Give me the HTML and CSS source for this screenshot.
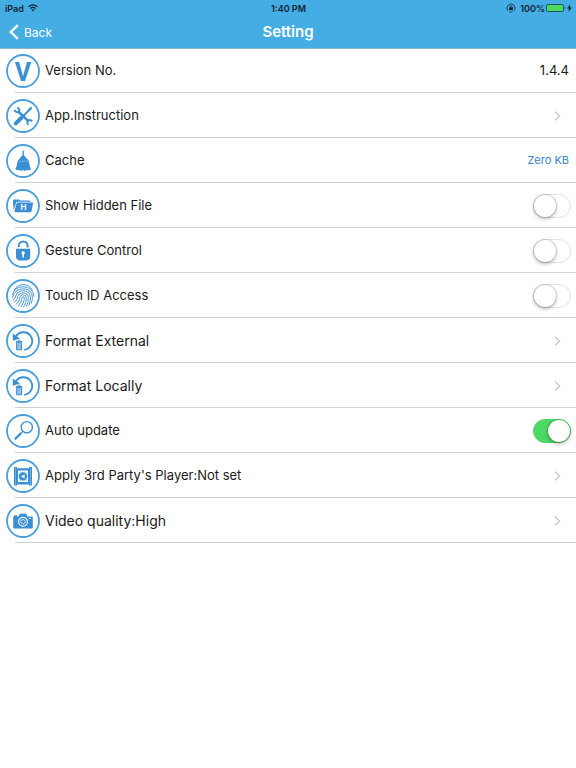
FILE: index.html
```html
<!DOCTYPE html>
<html lang="en">
<head>
    <meta charset="UTF-8">
    <meta name="viewport" content="width=device-width, initial-scale=1">
    <title>Setting</title>
    <link rel="stylesheet" href="styles.css">
</head>
<body>
<header class="top">
    <div class="status">
        <div class="status-left">
            <span>iPad</span>
            <svg class="wifi" width="10" height="8" viewBox="0 0 10 8">
                <path d="M0.6 2.8Q5 -1 9.4 2.8M2.2 4.6Q5 2.2 7.8 4.6" fill="none" stroke="#0c2430" stroke-width="1.2"/>
                <path d="M3.4 5.8Q5 4.6 6.6 5.8L5 7.6z" fill="#0c2430"/>
            </svg>
        </div>
        <span class="clock">1:40 PM</span>
        <div class="status-right">
            <svg class="lock" width="10" height="10" viewBox="0 0 10 10">
                <path d="M2.2 7.9A4 4 0 1 1 7.8 7.9M3.4 8.7Q5 9.3 6.6 8.7" fill="none" stroke="#0c2430" stroke-width="0.8"/>
                <path d="M3.9 4.6V4a1.1 1.1 0 0 1 2.2 0v0.6" fill="none" stroke="#0c2430" stroke-width="0.8"/>
                <rect x="3.1" y="4.4" width="3.8" height="2.6" fill="#0c2430"/>
            </svg>
            <span>100%</span>
            <svg width="20" height="8" viewBox="0 0 20 8">
                <rect x="0.5" y="0.5" width="17" height="7" rx="1.6" fill="#4cd964" stroke="#1d5068"/>
                <path d="M18.6 2.6Q20 4 18.6 5.4z" fill="#0c2430"/>
            </svg>
            <svg width="5" height="8" viewBox="0 0 5 8">
                <path d="M3.4 0.2L0 4.5H2L1.4 7.8L5 3.4H2.8z" fill="#0c2430"/>
            </svg>
        </div>
    </div>
    <nav class="nav">
        <a class="back" href="#">
            <svg width="10" height="16" viewBox="0 0 10 16">
                <path d="M8.8 1.2L1.8 8L8.8 14.8" fill="none" stroke="#fff" stroke-width="2.4"/>
            </svg>
            Back
        </a>
        <h1>Setting</h1>
    </nav>
</header>

<main>
    <ul class="list">
        <li>
            <svg class="icon" viewBox="0 0 34 34">
                <circle class="ring" cx="17" cy="17" r="16"/>
                <text class="letter-v" x="17" y="27" text-anchor="middle">V</text>
            </svg>
            <span class="name">Version No.</span>
            <span class="version">1.4.4</span>
        </li>
        <li>
            <svg class="icon" viewBox="0 0 34 34">
                <circle class="ring" cx="17" cy="17" r="16"/>
                <!-- wrench -->
                <path class="line" d="M11.8 12L22.6 22.4" stroke-width="2.6"/>
                <path class="line" d="M8.6 10.8A2.8 2.8 0 0 0 13 12.6A2.8 2.8 0 0 0 11.2 8.6M22.4 25.8A2.8 2.8 0 0 1 22.2 21.6A2.8 2.8 0 0 1 26 22.4" stroke-width="2"/>
                <!-- screwdriver -->
                <path class="line" d="M25 9.2L17.6 16.6" stroke-width="2"/>
                <path class="line" d="M15.2 19L9.8 24.4" stroke-width="4" stroke-linecap="round"/>
                <path class="fill" d="M22.8 9.2L26.2 7.6L25 11.4z"/>
            </svg>
            <span class="name">App.Instruction</span>
            <svg class="arrow" viewBox="0 0 7 10"><path d="M1 0.8L5.6 5L1 9.2"/></svg>
        </li>
        <li>
            <svg class="icon" viewBox="0 0 34 34">
                <circle class="ring" cx="17" cy="17" r="16"/>
                <path class="fill" d="M16.5 6.8h1.4v5.4h-1.4z"/>
                <path class="fill" d="M15.8 11.8h2.8L20.6 14.6Q22.4 15.6 22.8 17.2Q23.4 22 25 25.2L23.2 26.4L22.2 25.4L21.2 27L19.8 25.8L18.6 27.2L17.2 25.8L15.8 27.2L14.6 25.8L13.2 26.8L12.2 25.4L11 26.4L9.4 25.2Q11 22 11.6 17.2Q12 15.6 13.8 14.6z"/>
                <path d="M12.6 17.2H21.8" stroke="#8fbfe6" stroke-width="0.7"/>
            </svg>
            <span class="name">Cache</span>
            <span class="cache-size">Zero KB</span>
        </li>
        <li>
            <svg class="icon" viewBox="0 0 34 34">
                <circle class="ring" cx="17" cy="17" r="16"/>
                <path class="fill" d="M7 13v-1.2q0-1.2 1.2-1.2H13l1.4 1h9.2q1 0 1 1.2H10.4L7.6 21z"/>
                <path class="fill" d="M10.8 13.4H27.2L25.6 22q-0.2 1.2-1.4 1.2H9.4Q8.2 23.2 8.4 21.8z"/>
                <text class="letter-h" x="17.4" y="21.4" text-anchor="middle">H</text>
            </svg>
            <label class="name" for="hidden-file">Show Hidden File</label>
            <input class="switch" type="checkbox" id="hidden-file">
        </li>
        <li>
            <svg class="icon" viewBox="0 0 34 34">
                <circle class="ring" cx="17" cy="17" r="16"/>
                <path class="line" d="M12.8 13V11.8a4.4 4.4 0 0 1 8.8 0V13.4" stroke-width="2"/>
                <path class="fill" d="M10 14.8H24.2V22.6Q24.2 26.4 20.4 26.4H13.8Q10 26.4 10 22.6z"/>
                <path d="M17.1 17.2a1.7 1.7 0 0 1 0.8 3.2V23.4h-1.6V20.4a1.7 1.7 0 0 1 0.8-3.2z" fill="#fff"/>
            </svg>
            <label class="name" for="gesture">Gesture Control</label>
            <input class="switch" type="checkbox" id="gesture">
        </li>
        <li>
            <svg class="icon" viewBox="0 0 34 34">
                <circle class="ring" cx="17" cy="17" r="16"/>
                <g class="line" stroke-width="0.9" stroke-linecap="round">
                    <path d="M8.2 11Q11.6 5.6 17.4 5.6T26.2 10.6"/>
                    <path d="M6.4 15.4Q8.6 7.8 17.2 7.8Q26.8 7.8 28 17.2"/>
                    <path d="M6.4 18.4Q8.6 9.8 17.2 9.8Q26.2 10 26.4 18.4Q26.4 21.4 25.4 24.2"/>
                    <path d="M7.2 21Q9.6 19.4 9.8 17Q11.4 11.8 17.2 11.8Q24.4 12 24.4 19Q24.4 23 23 26.2"/>
                    <path d="M8.6 23.2Q11.6 20.6 11.8 17.8Q12.8 13.8 17 13.8Q22.4 14 22.4 19Q22.4 23.6 20.4 27.4"/>
                    <path d="M10.4 25.2Q13.6 22 13.8 18.4Q14.2 15.8 17 15.8Q20.4 16 20.4 19Q20.4 23.8 17.6 28"/>
                    <path d="M12.6 26.8Q15.8 23 15.8 19.2Q15.8 17.8 17 17.8Q18.4 17.8 18.4 19.2Q18.4 23.8 15 27.8"/>
                </g>
            </svg>
            <label class="name" for="touch-id">Touch ID Access</label>
            <input class="switch" type="checkbox" id="touch-id">
        </li>
        <li>
            <svg class="icon" viewBox="0 0 34 34">
                <circle class="ring" cx="17" cy="17" r="16"/>
                <path class="line" d="M9.8 12.6A8.8 8.8 0 1 1 18.2 25.8" stroke-width="1.8"/>
                <path class="fill" d="M6.8 9.4V16.8L14 14.4z"/>
                <path class="bin" d="M10.6 18.4h5v7.4h-5z"/>
                <path class="line" d="M9.8 17.6H16.4M11.8 16.2h2.6" stroke-width="1"/>
            </svg>
            <span class="name large">Format External</span>
            <svg class="arrow" viewBox="0 0 7 10"><path d="M1 0.8L5.6 5L1 9.2"/></svg>
        </li>
        <li>
            <svg class="icon" viewBox="0 0 34 34">
                <circle class="ring" cx="17" cy="17" r="16"/>
                <path class="line" d="M9.8 12.6A8.8 8.8 0 1 1 18.2 25.8" stroke-width="1.8"/>
                <path class="fill" d="M6.8 9.4V16.8L14 14.4z"/>
                <path class="bin" d="M10.6 18.4h5v7.4h-5z"/>
                <path class="line" d="M9.8 17.6H16.4M11.8 16.2h2.6" stroke-width="1"/>
            </svg>
            <span class="name large">Format Locally</span>
            <svg class="arrow" viewBox="0 0 7 10"><path d="M1 0.8L5.6 5L1 9.2"/></svg>
        </li>
        <li>
            <svg class="icon" viewBox="0 0 34 34">
                <circle class="ring" cx="17" cy="17" r="16"/>
                <circle class="line" cx="20.8" cy="13.2" r="5.6" stroke-width="1.4"/>
                <path class="line" d="M17 17.2L14.8 19.4" stroke-width="1.2"/>
                <path class="line" d="M14.6 19.6L9.4 24.8" stroke-width="2.2" stroke-linecap="round"/>
            </svg>
            <label class="name" for="auto-update">Auto update</label>
            <input class="switch" type="checkbox" id="auto-update" checked>
        </li>
        <li>
            <svg class="icon" viewBox="0 0 34 34">
                <circle class="ring" cx="17" cy="17" r="16"/>
                <path class="fill" d="M8 8h3v1.2h12V8h3v18.6h-3v-1.2H11v1.2H8zM12 11.6V23H22V11.6z" fill-rule="evenodd"/>
                <path d="M9.5 9V26M24.5 9V26" stroke="#8fbfe6" stroke-width="1" stroke-dasharray="1.4 0.8"/>
                <path d="M13 12.6H21V22H13z" fill="#d6e9f7"/>
                <circle class="fill" cx="17" cy="17.4" r="4.2"/>
                <path d="M15 17.4L18.6 15.2V19.6z" fill="#fff"/>
            </svg>
            <span class="name">Apply 3rd Party's Player:Not set</span>
            <svg class="arrow" viewBox="0 0 7 10"><path d="M1 0.8L5.6 5L1 9.2"/></svg>
        </li>
        <li>
            <svg class="icon" viewBox="0 0 34 34">
                <circle class="ring" cx="17" cy="17" r="16"/>
                <path class="fill" d="M7.2 12.4h1V11.2h2.8v1.2h1.6L13.8 9.8h6.4l1.2 2.6h4.4q1 0 1 1V23.4q0 1-1 1H8.2q-1 0-1-1z"/>
                <circle cx="17" cy="17.8" r="4.4" fill="none" stroke="#fff" stroke-width="1.1"/>
                <circle cx="17" cy="17.8" r="2.2" fill="none" stroke="#cfe5f6" stroke-width="1"/>
                <path d="M22.8 14.4h2.2" stroke="#fff"/>
            </svg>
            <span class="name large">Video quality:High</span>
            <svg class="arrow" viewBox="0 0 7 10"><path d="M1 0.8L5.6 5L1 9.2"/></svg>
        </li>
    </ul>
</main>
</body>
</html>
```
FILE: styles.css
```css
* {
    padding: 0;
    margin: 0;
    box-sizing: border-box;
}

body {
    font-family: Inter, "Liberation Sans", sans-serif;
    background-color: #fff;
    color: #1a1a1a;
}

.top {
    background-color: #44aee4;
    box-shadow: 0 1px 0 #8fb4c8;
}

.status {
    display: grid;
    grid-template-columns: 1fr auto 1fr;
    align-items: center;
    height: 16px;
    padding: 0 4px 0 5px;
    font-size: 9px;
    font-weight: 600;
    color: #0c2430;
}

.status-left,
.status-right {
    display: flex;
    align-items: center;
    gap: 1px;
}

.status-left {
    gap: 4px;
}

.status-right {
    justify-content: flex-end;
}

.lock {
    margin-right: 3px;
}

.nav {
    display: grid;
    grid-template-columns: 1fr auto 1fr;
    align-items: center;
    height: 32px;
    padding: 0 9px 2px;
    color: #fff;
}

.nav h1 {
    font-size: 15px;
    font-weight: 600;
}

.back {
    display: flex;
    align-items: center;
    gap: 5px;
    padding-top: 2px;
    font-size: 12px;
    color: #fff;
    text-decoration: none;
}

.list {
    list-style: none;
}

/*分割线从图标中间开始，所以图标往左移*/
.list li {
    display: flex;
    align-items: center;
    margin-left: 15px;
    padding: 6px 5px 4px 0;
    border-bottom: 1px solid #d0d0d2;
}

.icon {
    flex: none;
    width: 34px;
    height: 34px;
    margin-left: -9px;
    margin-right: 5px;
}

.ring {
    fill: none;
    stroke: #4a9fdb;
    stroke-width: 1.8;
}

.line {
    fill: none;
    stroke: #3a8fd3;
}

.fill {
    fill: #3a8fd3;
}

.bin {
    fill: #8fbfe6;
    stroke: #3a8fd3;
}

.letter-v {
    font-family: Roboto, sans-serif;
    font-size: 25px;
    font-weight: 700;
    fill: #3a8fd3;
}

.letter-h {
    font-size: 8px;
    font-weight: 700;
    fill: #fff;
}

.name,
.version,
.cache-size {
    padding-bottom: 2px;
}

.name {
    flex: 1;
    font-size: 13px;
}

.large {
    font-size: 14px;
}

.version {
    margin-right: 2px;
    font-size: 13px;
}

.cache-size {
    margin-right: 2px;
    font-size: 11px;
    color: #3a84c8;
}

.arrow {
    width: 7px;
    height: 10px;
    margin-right: 10px;
    fill: none;
    stroke: #c7c7cc;
    stroke-width: 1.4;
}

.switch {
    appearance: none;
    display: flex;
    width: 38px;
    height: 24px;
    border: 1px solid #e2e2e2;
    border-radius: 12px;
    background-color: #fff;
}

.switch::before {
    content: "";
    width: 22px;
    height: 22px;
    border-radius: 50%;
    background-color: #fff;
    box-shadow: 0 0 1px 1px rgba(0, 0, 0, 0.15), 0 2px 4px rgba(0, 0, 0, 0.25);
}

.switch:checked {
    justify-content: flex-end;
    border-color: #4cd964;
    background-color: #4cd964;
}
```
